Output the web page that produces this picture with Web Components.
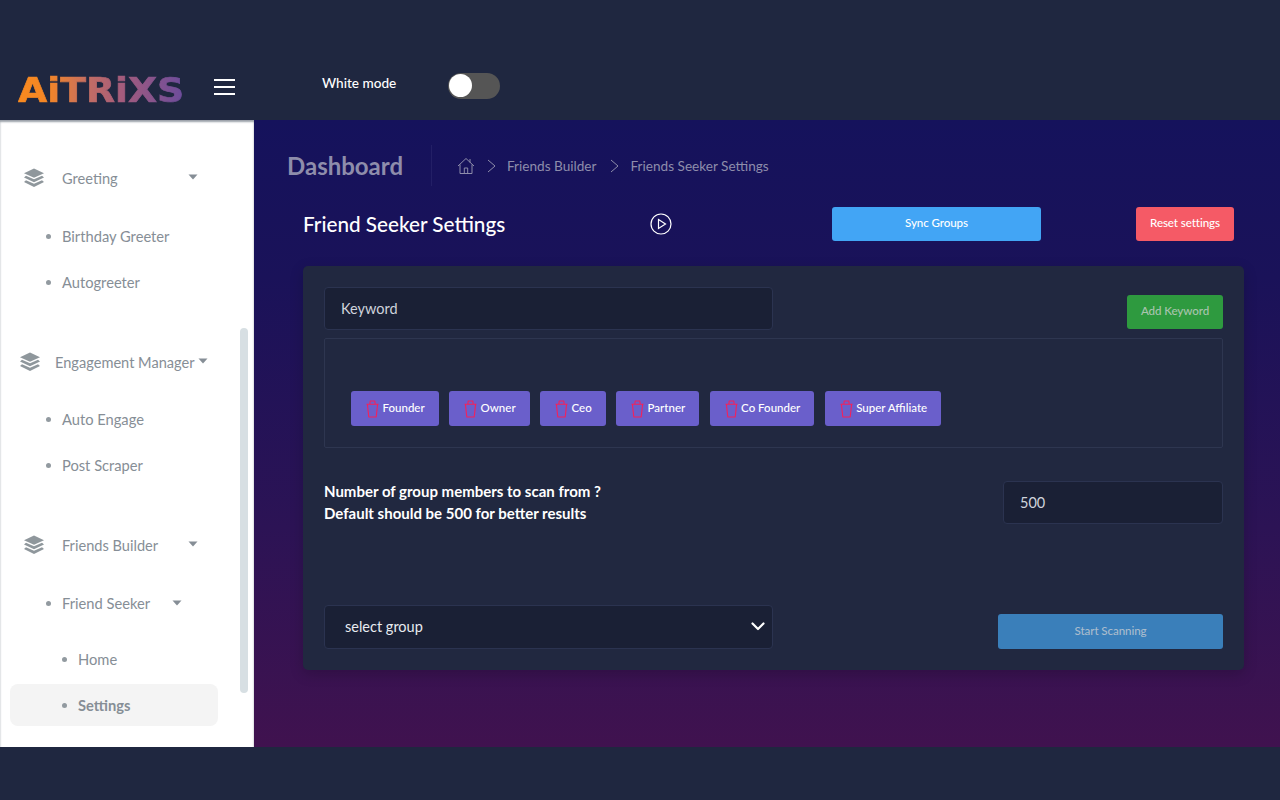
<!DOCTYPE html>
<html lang="en">
<head>
<meta charset="utf-8">
<title>Friend Seeker Settings</title>
<style>
  html, body { margin: 0; height: 100%; background: #1f2740; }
  body { font-family: Lato, "Open Sans", sans-serif; overflow: hidden; }
</style>
</head>
<body>
<app-shell>
  <app-topbar slot="top"></app-topbar>
  <app-sidebar slot="side">
    <nav-group label="Greeting" style="--icon-x:23px;--text-gap:17px;--caret-x:188px;--top:47px;--gap:24px">
      <nav-link>Birthday Greeter</nav-link>
      <nav-link>Autogreeter</nav-link>
    </nav-group>
    <nav-group label="Engagement Manager" style="--icon-x:19px;--text-gap:14px;--caret-x:198px;--top:46px;--gap:23px">
      <nav-link>Auto Engage</nav-link>
      <nav-link>Post Scraper</nav-link>
    </nav-group>
    <nav-group label="Friends Builder" style="--icon-x:23px;--text-gap:17px;--caret-x:188px;--top:46px;--gap:24px">
      <nav-link caret>Friend Seeker</nav-link>
      <nav-link sub style="margin-top:10px">Home</nav-link>
      <nav-link sub active>Settings</nav-link>
    </nav-group>
  </app-sidebar>
  <seeker-page slot="main"></seeker-page>
</app-shell>

<script>
// small helper, every element below just stamps its template into an open shadow root
function stamp(el, html) {
  const t = document.createElement('template')
  t.innerHTML = html
  el.attachShadow({ mode: 'open' }).appendChild(t.content.cloneNode(true))
}

const stackIcon = `<svg width="22" height="20" viewBox="0 0 22 20" fill="#8f979c"><path d="M11 0.5 21 5.2 11 9.8 1 5.2Z"/><path d="M3 7.7 11 11.2 19 7.7 21 9.4 11 14.2 1 9.4Z"/><path d="M3 12.2 11 15.7 19 12.2 21 13.9 11 19 1 13.9Z"/></svg>`
const caret = `<svg width="10" height="6" viewBox="0 0 10 6" fill="#868e96"><path d="M0.5 0.5H9.5L5 5.5Z"/></svg>`

class AppShell extends HTMLElement {
  constructor() {
    super()
    stamp(this, `
      <style>
        :host { display: grid; grid-template-columns: 254px 1fr; grid-template-rows: 120px 627px 53px; width: 1280px; height: 800px; background: #1f2740; }
        .top { grid-column: 1 / 3; }
        .foot { grid-column: 1 / 3; }
      </style>
      <div class="top"><slot name="top"></slot></div>
      <slot name="side"></slot>
      <slot name="main"></slot>
      <div class="foot"></div>`)
  }
}

class AppTopbar extends HTMLElement {
  constructor() {
    super()
    stamp(this, `
      <style>
        :host { display: flex; align-items: center; height: 120px; box-sizing: border-box; padding: 68px 0 16px 18px; background: #1f2740; color: #fff; }
        .logo { width: 164px; height: 30px; overflow: visible; }
        .logo span { display: inline-block; font: 700 34px/30px "DejaVu Sans", sans-serif; transform-origin: 0 50%; transform: translateY(4px) scaleX(1.11); white-space: nowrap; -webkit-text-stroke: .7px transparent;
          background: linear-gradient(90deg, #f98a1f 0%, #f48626 18%, #c36d63 42%, #a45c7c 62%, #6c4c9c 100%); -webkit-background-clip: text; background-clip: text; color: transparent; }
        .burger { width: 21px; margin-left: 32px; display: flex; flex-direction: column; gap: 5px; position: relative; top: 1px; }
        .burger i { display: block; height: 2px; background: #fff; }
        .mode { margin-left: 87px; width: 126px; font-size: 13.6px; font-weight: 500; position: relative; top: -3px; }
        .sw { width: 52px; height: 26px; border-radius: 13px; background: #555; position: relative; }
        .sw::before { content: ""; position: absolute; left: 1px; top: 1px; width: 23px; height: 23px; border-radius: 50%; background: #fff; }
      </style>
      <div class="logo"><span>AiTRiXS</span></div>
      <div class="burger"><i></i><i></i><i></i></div>
      <div class="mode">White mode</div>
      <div class="sw"></div>`)
  }
}

class AppSidebar extends HTMLElement {
  constructor() {
    super()
    stamp(this, `
      <style>
        :host { display: block; position: relative; background: #fff; overflow: hidden; box-shadow: inset 0 2px 2px #9aa0a8; }
        .thumb { position: absolute; left: 240px; top: 208px; width: 8px; height: 365px; border-radius: 4px; background: #d7dfe3; }
      </style>
      <slot></slot>
      <div class="thumb"></div>`)
  }
}

class NavGroup extends HTMLElement {
  constructor() {
    super()
    stamp(this, `
      <style>
        :host { display: block; padding-top: var(--top, 44px); color: #868e96; font-size: 14.6px; }
        .head { display: flex; align-items: center; height: 22px; padding-left: var(--icon-x); position: relative; margin-bottom: var(--gap, 24px); }
        .label { margin-left: var(--text-gap); }
        svg.c { position: absolute; left: var(--caret-x); top: 7px; }
      </style>
      <div class="head">${stackIcon}<span class="label"></span><span id="c"></span></div>
      <slot></slot>`)
    this.shadowRoot.querySelector('.label').textContent = this.getAttribute('label')
    this.shadowRoot.querySelector('#c').innerHTML = caret.replace('<svg', '<svg class="c"')
  }
}

class NavLink extends HTMLElement {
  constructor() {
    super()
    const sub = this.hasAttribute('sub')
    const active = this.hasAttribute('active')
    stamp(this, `
      <style>
        :host { display: flex; align-items: center; height: ${active ? 42 : 46}px; margin: ${active ? '2px 36px 0 10px' : '0 36px 0 10px'}; padding-left: ${sub ? 52 : 36}px; border-radius: 8px;
          color: #868e96; font-size: 14.7px; font-weight: ${active ? 700 : 400}; background: ${active ? '#f4f4f4' : 'transparent'}; box-sizing: border-box; }
        i { width: 5px; height: 5px; border-radius: 50%; background: #929aa0; margin-right: 11px; flex: none; }
        svg { margin-left: 22px; }
      </style>
      <i></i><slot></slot>${this.hasAttribute('caret') ? caret : ''}`)
  }
}

class UiButton extends HTMLElement {
  constructor() {
    super()
    stamp(this, `
      <style>
        :host { display: flex; align-items: center; justify-content: center; height: 34px; padding-bottom: 3px; border-radius: 3px; font-size: 11.6px; font-weight: 500; color: var(--fg, #fff); background: var(--bg, #42a5f5); box-sizing: border-box; letter-spacing: -.1px; }
      </style>
      <slot></slot>`)
  }
}

class DarkField extends HTMLElement {
  constructor() {
    super()
    stamp(this, `
      <style>
        :host { display: flex; align-items: center; justify-content: space-between; box-sizing: border-box; height: 43px; padding: 0 7px 1px 16px; background: #1a2035; border: 1px solid #2b3350; border-radius: 4px; color: var(--fg, #cfd3dc); font-size: 14.5px; }
      </style>
      <slot></slot>`)
  }
}

class TagChip extends HTMLElement {
  constructor() {
    super()
    stamp(this, `
      <style>
        :host { display: inline-flex; align-items: center; height: 35px; box-sizing: border-box; padding: 0 14px; border-radius: 3px; background: #6a5fcb; color: #fff; font-size: 11.5px; font-weight: 500; gap: 2.5px; }
        span { padding-bottom: 3px; }
      </style>
      <svg width="15" height="18" viewBox="0 0 15 18" fill="none" stroke="#f5205a" stroke-width="1.1" stroke-linejoin="round"><path d="M1.5 4.2H13.5M4.8 4.2 5.2 1H9.8L10.2 4.2M2.4 4.2 3.8 17H11.2L12.6 4.2"/></svg>
      <span><slot></slot></span>`)
  }
}

class SeekerPage extends HTMLElement {
  constructor() {
    super()
    stamp(this, `
      <style>
        :host { display: block; box-sizing: border-box; padding: 25px 36px 0 49px; background: linear-gradient(180deg, #15125c 0%, #1a1259 25%, #2c1355 65%, #40124f 100%); color: #fff; }
        .crumbs { display: flex; align-items: center; height: 41px; margin-left: -15px; color: #8e8dab; }
        h1 { margin: 0 0 0 -1px; font-size: 24px; font-weight: 700; width: 144px; }
        .rule { width: 1px; height: 41px; background: #231f66; }
        .crumbs svg { margin-left: 25px; }
        .crumbs span { font-size: 13.6px; }
        .title { display: flex; align-items: center; height: 34px; margin-top: 21px; }
        h2 { margin: 0 0 1px; font-size: 20.7px; font-weight: 500; width: 347px; white-space: nowrap; }
        .sync { width: 209px; margin-left: 160px; }
        .reset { width: 98px; margin-left: 95px; --bg: #f55a66; }
        .card { margin-top: 25px; height: 404px; box-sizing: border-box; padding: 21px 21px 0; background: #212840; border-radius: 5px; box-shadow: 0 4px 14px rgba(0,0,0,.18); }
        .row { display: flex; justify-content: space-between; }
        .kw { width: 449px; }
        .add { width: 96px; margin-top: 8px; --bg: #2e9a3f; --fg: #a9c4ae; }
        .tags { height: 110px; margin-top: 8px; box-sizing: border-box; border: 1px solid #2e3650; border-radius: 2px; padding: 52px 0 0 26px; display: flex; gap: 10.4px; align-items: flex-start; }
        .scan { margin-top: 33px; height: 124px; }
        .scan p { margin: -1px 0 0; font-size: 15px; line-height: 22px; font-weight: 700; }
        .num { width: 220px; }
        .sel { width: 449px; height: 44px; padding-left: 20px; --fg: #e8ebf0; }
        .chev { flex: none; }
        .start { width: 225px; margin-top: 9px; height: 35px; --bg: #3a7fba; --fg: #a9bccd; }
      </style>
      <div class="crumbs">
        <h1>Dashboard</h1>
        <div class="rule"></div>
        <svg width="18" height="18" viewBox="0 0 18 18" fill="none" stroke="#8e8dab" stroke-width="1"><path d="M1 9 9 1.5 17 9M3 7.5V16.5H15V7.5M7.3 16.5V11H10.7V16.5M13 5.5V2"/></svg>
        <svg style="margin-left:12px" width="9" height="14" viewBox="0 0 9 14" fill="none" stroke="#8e8dab" stroke-width="1"><path d="M1 1 8 7 1 13"/></svg>
        <span style="margin-left:11px">Friends Builder</span>
        <svg style="margin-left:13px" width="9" height="14" viewBox="0 0 9 14" fill="none" stroke="#8e8dab" stroke-width="1"><path d="M1 1 8 7 1 13"/></svg>
        <span style="margin-left:12px">Friends Seeker Settings</span>
      </div>
      <div class="title">
        <h2>Friend Seeker Settings</h2>
        <svg class="play" width="22" height="22" viewBox="0 0 22 22" fill="none" stroke="#fff" stroke-width="1.2"><circle cx="11" cy="11" r="10"/><path d="M8.5 6.5 15.5 11 8.5 15.5Z"/></svg>
        <ui-button class="sync">Sync Groups</ui-button>
        <ui-button class="reset">Reset settings</ui-button>
      </div>
      <div class="card">
        <div class="row">
          <dark-field class="kw">Keyword</dark-field>
          <ui-button class="add">Add Keyword</ui-button>
        </div>
        <div class="tags">
          <tag-chip>Founder</tag-chip><tag-chip>Owner</tag-chip><tag-chip>Ceo</tag-chip><tag-chip>Partner</tag-chip><tag-chip>Co Founder</tag-chip><tag-chip>Super Affiliate</tag-chip>
        </div>
        <div class="row scan">
          <p>Number of group members to scan from ?<br>Default should be 500 for better results</p>
          <dark-field class="num">500</dark-field>
        </div>
        <div class="row">
          <dark-field class="sel">select group
            <svg class="chev" width="14" height="9" viewBox="0 0 14 9" fill="none" stroke="#fff" stroke-width="2.2" stroke-linecap="round" stroke-linejoin="round"><path d="M1.5 1.5 7 7 12.5 1.5"/></svg>
          </dark-field>
          <ui-button class="start">Start Scanning</ui-button>
        </div>
      </div>`)
  }
}

customElements.define('app-shell', AppShell)
customElements.define('app-topbar', AppTopbar)
customElements.define('app-sidebar', AppSidebar)
customElements.define('nav-group', NavGroup)
customElements.define('nav-link', NavLink)
customElements.define('ui-button', UiButton)
customElements.define('dark-field', DarkField)
customElements.define('tag-chip', TagChip)
customElements.define('seeker-page', SeekerPage)
</script>
</body>
</html>
